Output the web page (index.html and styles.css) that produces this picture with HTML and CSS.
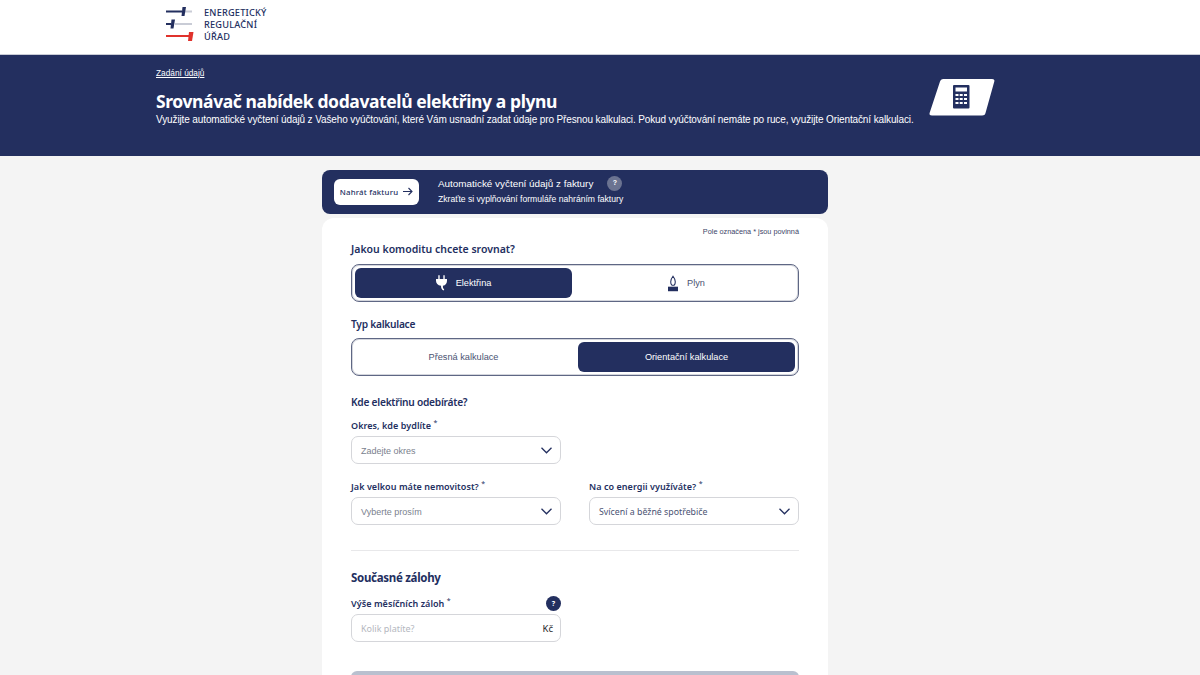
FILE: index.html
```html
<!DOCTYPE html>
<html lang="cs">
<head>
  <meta charset="UTF-8">
  <title>Srovnávač nabídek dodavatelů elektřiny a plynu</title>
  <link rel="stylesheet" href="styles.css">
</head>
<body>
  <header class="top">
    <svg class="logo-mark" width="28" height="35" viewBox="0 0 28 35">
      <rect x="0" y="3.500" width="16" height="2" fill="#232f5f"/>
      <rect x="19" y="3.500" width="7" height="2" fill="#c9ccd6"/>
      <path d="M15.500 9 L16.500 0 H20 L18.500 9 Z" fill="#232f5f"/>
      <rect x="0" y="16" width="5" height="2" fill="#232f5f"/>
      <rect x="9" y="16" width="17" height="2" fill="#c9ccd6"/>
      <path d="M4.500 21.500 L5.500 12.500 H9 L7.500 21.500 Z" fill="#232f5f"/>
      <rect x="0" y="28" width="23" height="2" fill="#e0322c"/>
      <path d="M22 34 L23 25 H27.500 L26 34 Z" fill="#e0322c"/>
    </svg>
    <div class="logo-text">ENERGETICKÝ<br>REGULAČNÍ<br>ÚŘAD</div>
  </header>

  <section class="hero">
    <div class="hero-text">
      <a class="crumb" href="#">Zadání údajů</a>
      <h1>Srovnávač nabídek dodavatelů elektřiny a plynu</h1>
      <p>Využijte automatické vyčtení údajů z Vašeho vyúčtování, které Vám usnadní zadat údaje pro Přesnou kalkulaci. Pokud vyúčtování nemáte po ruce, využijte Orientační kalkulaci.</p>
    </div>
    <svg class="hero-icon" width="66" height="37" viewBox="0 0 66 37">
      <path d="M11 2.500 Q11.500 0 14 0 H63 Q66 0 65.300 2.500 L56.500 34 Q56 36.500 53 36.500 H3 Q0 36.500 .6 34 Z" fill="#fff"/>
      <rect x="24" y="6" width="16.500" height="23.500" rx="1" fill="#232f5f"/>
      <rect x="26.500" y="8.500" width="11.500" height="4" fill="#fff"/>
      <g fill="#fff">
        <rect x="26.500" y="15" width="3" height="2"/><rect x="30.700" y="15" width="3" height="2"/><rect x="35" y="15" width="3" height="2"/>
        <rect x="26.500" y="19" width="3" height="2"/><rect x="30.700" y="19" width="3" height="2"/><rect x="35" y="19" width="3" height="2"/>
        <rect x="26.500" y="23" width="3" height="2"/><rect x="30.700" y="23" width="3" height="2"/><rect x="35" y="23" width="3" height="2"/>
      </g>
    </svg>
  </section>

  <main class="wrap">
    <div class="upload">
      <button class="upload-btn">Nahrát fakturu
        <svg width="10" height="9" viewBox="0 0 10 9" fill="none" stroke="#232f5f" stroke-width="1.100"><path d="M0 4.500 H9 M5.500 1 L9 4.500 L5.500 8"/></svg>
      </button>
      <div class="upload-text">
        <div class="upload-title">Automatické vyčtení údajů z faktury <span class="help help-grey">?</span></div>
        <div class="upload-sub">Zkraťte si vyplňování formuláře nahráním faktury</div>
      </div>
    </div>

    <form class="card">
      <div class="req-note">Pole označena * jsou povinná</div>

      <h3 class="q q-first">Jakou komoditu chcete srovnat?</h3>
      <div class="switch">
        <div class="opt active">
          <svg width="11" height="16" viewBox="0 0 12 17" fill="#fff"><path d="M2.500 0 H4 V4 H8 V0 H9.500 V4 H12 V6 Q12 10.500 7.500 11.500 Q7 14 9 15.500 L8.200 16.800 Q5.200 15 5.500 11.500 Q0 10.500 0 6 V4 H2.500 Z"/></svg>
          Elektřina
        </div>
        <div class="opt">
          <svg width="10" height="17" viewBox="0 0 11 17"><path d="M5.500 .5 C7.500 3 8 5 8 6.500 C8 9 7 10.500 5.500 10.500 C4 10.500 3 9 3 6.500 C3 5 3.500 3 5.500 .5 Z" fill="none" stroke="#232f5f" stroke-width="1.200"/><rect x="0" y="12" width="11" height="5" fill="#232f5f"/></svg>
          Plyn
        </div>
      </div>

      <h3 class="q">Typ kalkulace</h3>
      <div class="switch">
        <div class="opt">Přesná kalkulace</div>
        <div class="opt active">Orientační kalkulace</div>
      </div>

      <h3 class="q q-where">Kde elektřinu odebíráte?</h3>

      <div class="row">
        <div class="field">
          <label>Okres, kde bydlíte <sup>*</sup></label>
          <div class="select">Zadejte okres
            <svg width="11" height="7" viewBox="0 0 11 7" fill="none" stroke="#232f5f" stroke-width="1.300"><path d="M.5 .8 L5.500 5.800 L10.500 .8"/></svg>
          </div>
        </div>
      </div>

      <div class="row">
        <div class="field">
          <label>Jak velkou máte nemovitost? <sup>*</sup></label>
          <div class="select">Vyberte prosím
            <svg width="11" height="7" viewBox="0 0 11 7" fill="none" stroke="#232f5f" stroke-width="1.300"><path d="M.5 .8 L5.500 5.800 L10.500 .8"/></svg>
          </div>
        </div>
        <div class="field">
          <label>Na co energii využíváte? <sup>*</sup></label>
          <div class="select select-filled">Svícení a běžné spotřebiče
            <svg width="11" height="7" viewBox="0 0 11 7" fill="none" stroke="#232f5f" stroke-width="1.300"><path d="M.5 .8 L5.500 5.800 L10.500 .8"/></svg>
          </div>
        </div>
      </div>

      <hr class="line">

      <h3 class="q q-big">Současné zálohy</h3>
      <div class="row">
        <div class="field">
          <label class="label-help">
            <span>Výše měsíčních záloh <sup>*</sup></span>
            <span class="help">?</span>
          </label>
          <div class="select input">Kolik platíte?<span class="unit">Kč</span></div>
        </div>
      </div>

      <div class="submit"></div>
    </form>
  </main>
</body>
</html>
```

FILE: styles.css
```css
html, body { height: 675px; overflow: hidden; }
body { background: #f4f4f4; font-family: "Liberation Sans", Arial, sans-serif; color: #232f5f; margin: 0; }

.top { background: #fff; padding: 5px 0 0 166px; display: flex; align-items: flex-start; gap: 10px; border-bottom: 1px solid #c9ccd6; box-sizing: border-box; height: 55px; }
.logo-mark { display: block; margin-top: 2px; }
.logo-text { font-family: "Noto Sans", sans-serif; font-size: 9.2px; line-height: 12px; letter-spacing: .2px; color: #232f5f; font-weight: 500; margin-top: 2px; }

.hero { background: #232f5f; color: #fff; height: 101px; padding-left: 156px; display: flex; gap: 17px; box-sizing: border-box; }
.hero-text { width: 756px; flex: none; padding-top: 12px; }
.crumb { display: block; color: #fff; font-size: 8.3px; line-height: 12px; }
.hero h1 { font-family: "Noto Sans", sans-serif; font-size: 17.500px; line-height: 23px; font-weight: 700; letter-spacing: -.4px; margin: 11px 0 0; white-space: nowrap; }
.hero p { font-size: 10px; letter-spacing: -.12px; line-height: 14px; margin: 0; white-space: nowrap; }
.hero-icon { margin-top: 24px; flex: none; }

.wrap { width: 506px; margin: 14px 0 0 322px; }
.upload { background: #232f5f; color: #fff; height: 44px; border-radius: 8px; display: flex; align-items: center; padding-left: 12px; gap: 19px; }
.upload-btn { background: #fff; border: none; border-radius: 6px; width: 85px; height: 26px; color: #232f5f; font-family: "Noto Sans", sans-serif; font-size: 7.800px; font-weight: 500; letter-spacing: .2px; display: flex; align-items: center; justify-content: center; gap: 5px; padding: 0 0 1px; }
.upload-title { font-size: 9.9px; line-height: 14px; display: flex; align-items: center; gap: 14px; margin-top: -2px; }
.upload-sub { font-size: 8.6px; line-height: 12px; margin-top: 2px; }

.help { width: 15px; height: 15px; border-radius: 50%; background: #232f5f; color: #fff; font-size: 7px; font-weight: bold; display: inline-flex; align-items: center; justify-content: center; }
.help-grey { background: #6b7391; margin-top: -2px; }

.card { background: #fff; border-radius: 12px; margin-top: 4px; padding: 9px 29px 0; height: 480px; }
.req-note { text-align: right; font-size: 7.3px; line-height: 10px; color: #3c4568; }

.q { font-family: "Noto Sans", sans-serif; font-size: 10.200px; letter-spacing: -.25px; line-height: 14px; font-weight: 600; margin: 15px 0 7px; color: #232f5f; }
.q-first { font-size: 10.500px; letter-spacing: 0; margin: 5px 0 8px; }
.q-where { margin: 19px 0 11px; }
.q-big { font-size: 11.500px; letter-spacing: -.3px; line-height: 16px; font-weight: 700; margin: 19px 0 10px; }

.switch { border: 1px solid #5f6784; box-shadow: inset 0 0 0 1px #d4d6dd; border-radius: 8px; height: 38px; padding: 3px; display: flex; box-sizing: border-box; gap: 6px; }
.opt { flex: 1; border-radius: 6px; display: flex; align-items: center; justify-content: center; gap: 9px; font-size: 9.2px; color: #4a5272; }
.opt.active { background: #232f5f; color: #fff; }

.row { display: grid; grid-template-columns: 210px 210px; gap: 28px; margin-bottom: 17px; }
.field label { display: block; font-family: "Noto Sans", sans-serif; font-size: 9px; line-height: 12px; font-weight: 600; letter-spacing: .05px; margin-bottom: 4px; }
.field sup { font-size: 7px; line-height: 0; font-weight: 400; }
.label-help { display: flex !important; justify-content: space-between; align-items: center; height: 15px; margin-bottom: 3px !important; }
.select { border: 1px solid #d5d6da; border-radius: 7px; height: 28px; box-sizing: border-box; display: flex; align-items: center; justify-content: space-between; padding: 1px 8px 0 9px; font-size: 9px; color: #7a7f8e; }
.select-filled { color: #4a5272; font-family: "Noto Sans", sans-serif; font-size: 8.8px; }
.input { color: #b4b7c0; font-family: "Noto Sans", sans-serif; padding-right: 7px; }
.unit { color: #2c2c2c; font-size: 9.500px; }

.line { border: none; border-top: 1px solid #e8e8ea; margin: 25px 0 0; }
.submit { background: #b9c0cf; border-radius: 6px; height: 40px; margin-top: 29px; }
```
